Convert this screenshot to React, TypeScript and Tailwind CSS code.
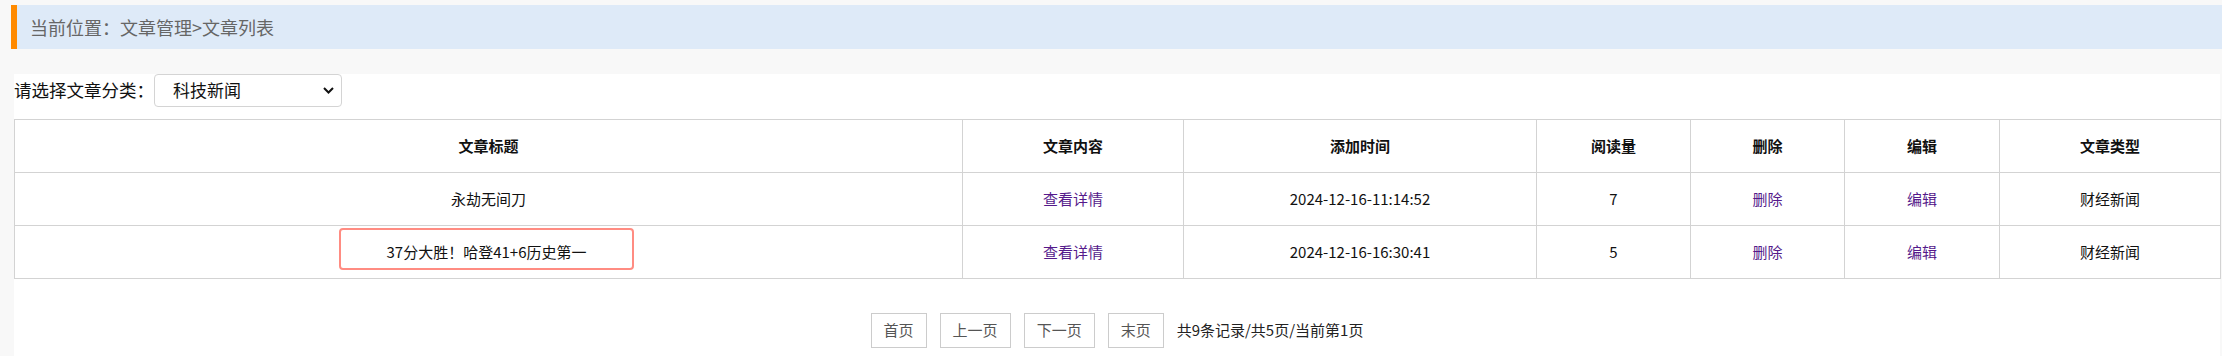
import React from "react";

const cols = [948, 221, 353, 154, 154, 155, 221];
const headers = ["文章标题", "文章内容", "添加时间", "阅读量", "删除", "编辑", "文章类型"];

const rows = [
  { title: "永劫无间刀", time: "2024-12-16-11:14:52", views: "7", type: "财经新闻", boxed: false },
  { title: "37分大胜！哈登41+6历史第一", time: "2024-12-16-16:30:41", views: "5", type: "财经新闻", boxed: true },
];

export default function App() {
  return (
    <div className="min-h-screen flex flex-col bg-[#f8f8f8] font-[family-name:'Noto_Sans_CJK_SC','Noto_Sans',sans-serif] text-[#111]">
      <div className="mt-[5px] ml-[11px] h-[44px] flex items-center border-l-[6px] border-[#ff8a00] bg-[#deeaf8] pl-[13px] text-[18px] text-[#666]">
        当前位置：文章管理&gt;文章列表
      </div>
      <div className="mt-[25px] ml-[14px] mr-[2px] flex-1 bg-white">
        <div className="flex h-[32px] items-center">
          <span className="text-[17.5px] text-[#111] leading-none">请选择文章分类：</span>
          <div className="flex h-[33px] w-[188px] items-center justify-between rounded-[4px] border border-[#d4d4d4] pl-[18px] pr-[7px] text-[17px] text-[#111]">
            <span>科技新闻</span>
            <svg width="11" height="7" viewBox="0 0 11 7" fill="none">
              <path d="M1 1L5.5 5.5L10 1" stroke="#111" strokeWidth="2" />
            </svg>
          </div>
        </div>
        <table className="mt-[13px] w-full table-fixed border-collapse text-[15px]">
          <colgroup>
            {cols.map((w, i) => (
              <col key={i} style={{ width: w }} />
            ))}
          </colgroup>
          <thead>
            <tr className="h-[53px]">
              {headers.map((h) => (
                <th key={h} className="border border-[#d3d3d3] text-center font-bold text-[#111]">
                  {h}
                </th>
              ))}
            </tr>
          </thead>
          <tbody>
            {rows.map((r, i) => (
              <tr key={i} className="h-[53px]">
                {r.boxed ? (
                  <td className="border border-[#d3d3d3] text-center align-top pt-[2px] pr-[4px]">
                    <div className="mx-auto w-[295px] h-[42px] rounded-[4px] border-2 border-[#ff8c82] pt-[12px] leading-[20px]">
                      {r.title}
                    </div>
                  </td>
                ) : (
                  <td className="border border-[#d3d3d3] text-center">{r.title}</td>
                )}
                <td className="border border-[#d3d3d3] text-center text-[#551a8b]">查看详情</td>
                <td className="border border-[#d3d3d3] text-center">{r.time}</td>
                <td className="border border-[#d3d3d3] text-center">{r.views}</td>
                <td className="border border-[#d3d3d3] text-center text-[#551a8b]">删除</td>
                <td className="border border-[#d3d3d3] text-center text-[#551a8b]">编辑</td>
                <td className="border border-[#d3d3d3] text-center">{r.type}</td>
              </tr>
            ))}
          </tbody>
        </table>
        <div className="mt-[34px] flex items-center justify-center gap-[13px] text-[15px]">
          {["首页", "上一页", "下一页", "末页"].map((b) => (
            <div key={b} className="flex h-[35px] items-center border border-[#cccccc] px-[12px] text-[#555]">
              {b}
            </div>
          ))}
          <span className="text-[#222]">共9条记录/共5页/当前第1页</span>
        </div>
      </div>
    </div>
  );
}
